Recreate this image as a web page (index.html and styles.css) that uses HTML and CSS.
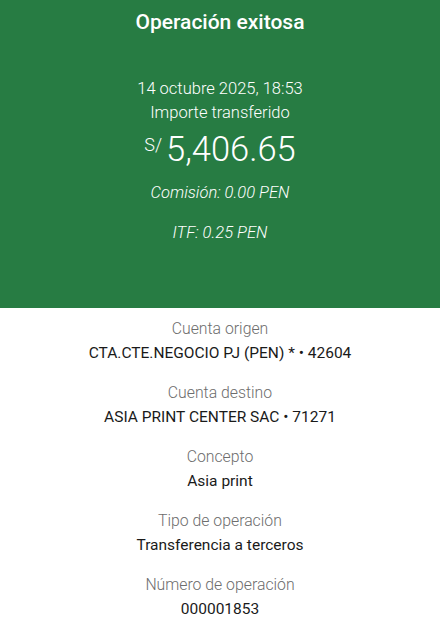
FILE: index.html
```
<html>

<head>
    <title>Operación exitosa</title>
    <link rel="stylesheet" href="styles.css">
</head>

<body>
    <div class="banner">
        <h1>Operación exitosa</h1>
        <p class="date">14 octubre 2025, 18:53</p>
        <p class="caption">Importe transferido</p>
        <div class="amount"><span class="currency">S/</span>5,406.65</div>
        <p class="fee">Comisión: 0.00 PEN</p>
        <p class="fee itf">ITF: 0.25 PEN</p>
    </div>

    <div class="details">
        <div class="item">
            <span class="label">Cuenta origen</span>
            <span class="value">CTA.CTE.NEGOCIO PJ (PEN) * • 42604</span>
        </div>
        <div class="item">
            <span class="label">Cuenta destino</span>
            <span class="value">ASIA PRINT CENTER SAC • 71271</span>
        </div>
        <div class="item">
            <span class="label">Concepto</span>
            <span class="value">Asia print</span>
        </div>
        <div class="item">
            <span class="label">Tipo de operación</span>
            <span class="value">Transferencia a terceros</span>
        </div>
        <div class="item">
            <span class="label">Número de operación</span>
            <span class="value">000001853</span>
        </div>
    </div>
</body>

</html>
```

FILE: styles.css
```
body {
    margin: 0;
    font-family: Roboto, "Liberation Sans", sans-serif;
    background: #ffffff;
}

.banner {
    background-color: #277c43;
    color: #ffffff;
    height: 308px;
    text-align: center;
    padding-top: 10px;
    box-sizing: border-box;
}

h1 {
    margin: 0;
    font-size: 21px;
    font-weight: 500;
    line-height: 24px;
}

.banner p {
    margin: 0;
    font-weight: 300;
    font-size: 16.5px;
}

.date {
    margin-top: 43px !important;
    line-height: 24px;
}

.caption {
    line-height: 24px;
}

.amount {
    font-size: 34.5px;
    font-weight: 300;
    line-height: 40px;
    margin-top: 0;
}

.currency {
    font-size: 18px;
    vertical-align: 10px;
    margin-right: 4px;
}

.fee {
    font-style: italic;
    line-height: 24px;
    margin-top: 12px !important;
}

.fee.itf {
    margin-top: 16px !important;
}

.details {
    display: flex;
    flex-direction: column;
    align-items: center;
    padding-top: 9px;
}

.item {
    display: flex;
    flex-direction: column;
    align-items: center;
    margin-bottom: 16px;
}

.label {
    color: #6d6d6d;
    font-size: 15.8px;
    font-weight: 300;
    line-height: 24px;
}

.value {
    color: #1a1a1a;
    font-size: 15.5px;
    font-weight: 400;
    line-height: 24px;
}
```
